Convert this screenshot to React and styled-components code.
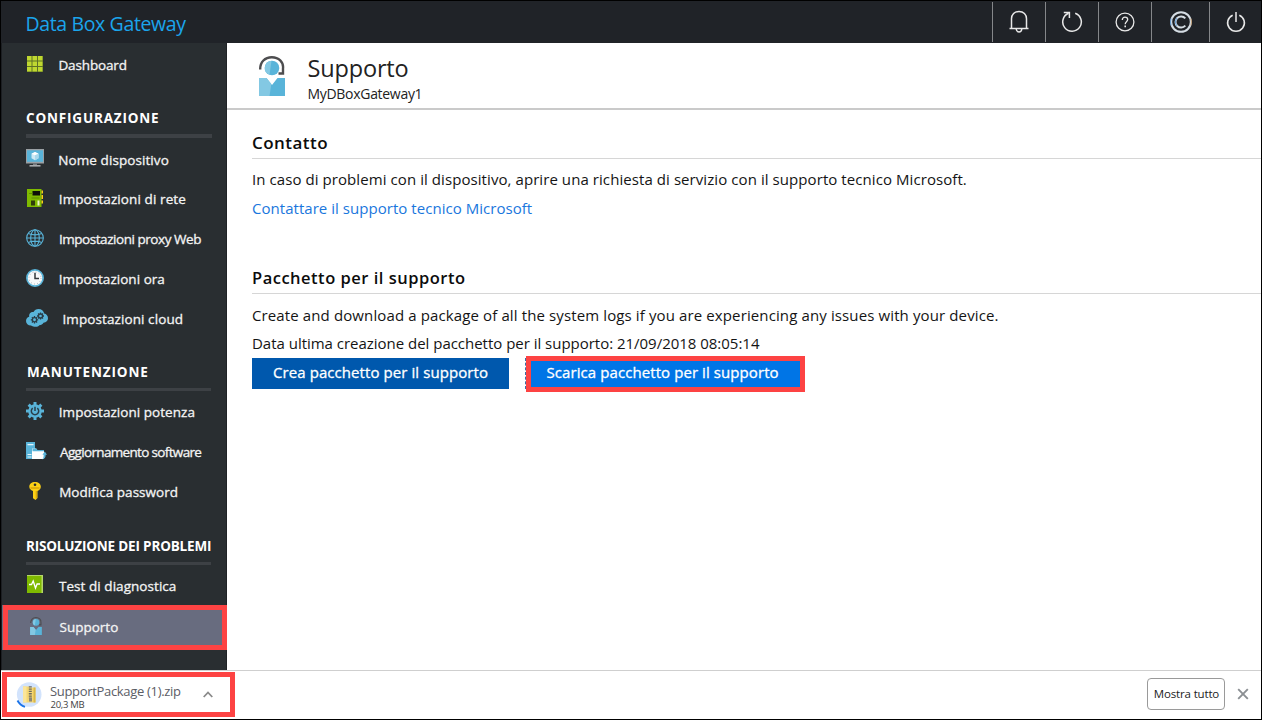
import React from "react";
import styled, { createGlobalStyle } from "styled-components";

const GlobalStyle = createGlobalStyle`
  *, *::before, *::after { box-sizing: border-box; }
  body {
    margin: 0;
    font-family: "Open Sans", "Noto Sans", sans-serif;
    color: #111;
    background: #fff;
  }
  h1, h2, h3, p { margin: 0; font-weight: 400; }
  svg { display: block; flex: none; }
  button { font-family: inherit; cursor: pointer; }
`;

const Window = styled.div`
  width: 1262px;
  height: 720px;
  display: flex;
  flex-direction: column;
  border: 1px solid #000;
  background: #fff;
  overflow: hidden;
`;

/* Top bar */
const TopBar = styled.header`
  flex: 0 0 42px;
  display: flex;
  justify-content: space-between;
  background: #202328;
`;

const Brand = styled.h1`
  padding: 3px 0 0 24.5px;
  font-size: 19.5px;
  line-height: 39px;
  letter-spacing: -0.37px;
  color: #1ba5ec;
`;

const Tools = styled.nav`
  display: flex;
  padding-top: 1px;
`;

const Tool = styled.button`
  width: ${(p) => p.$width}px;
  height: 40px;
  padding: 0 ${(p) => p.$inset || 0}px 0 0;
  display: flex;
  align-items: center;
  justify-content: center;
  border: 0;
  border-left: 1px solid #85878a;
  background: none;
  color: #e8e8e8;
`;

/* Side menu */
const Body = styled.div`
  flex: 0 0 627px;
  display: flex;
`;

const Sidebar = styled.aside`
  flex: 0 0 226px;
  padding-top: 2px;
  border-left: 1px solid #1b1e22;
  border-right: 1px solid #1f2226;
  background: #292e31;
  color: #f4f4f4;
`;

const Item = styled.a`
  position: relative;
  height: ${(p) => p.$height || 40}px;
  display: flex;
  align-items: center;
  padding: 0 0 ${(p) => (p.$active ? 2 : 0)}px 24px;
  background: ${(p) => (p.$active ? "#686c7f" : "none")};
`;

const IconSlot = styled.span`
  flex: 0 0 32px;
  height: 22px;
  display: flex;
  align-items: center;
  margin-top: ${(p) => p.$lift || -3}px;
`;

const ItemText = styled.span`
  padding-left: ${(p) => p.$indent || 0}px;
  font-size: 13.5px;
  -webkit-text-stroke: 0.3px currentColor;
  line-height: 20px;
  letter-spacing: ${(p) => p.$spacing || 0}px;
  white-space: nowrap;
`;

const Group = styled.h2`
  width: ${(p) => p.$width}px;
  margin: ${(p) => p.$top}px 0 ${(p) => p.$bottom}px 24px;
  padding: 0 0 6px ${(p) => p.$indent || 0}px;
  border-bottom: ${(p) => p.$rule}px solid #3d4145;
  font-size: 13.5px;
  font-weight: 700;
  line-height: 20px;
  letter-spacing: ${(p) => p.$spacing}px;
  white-space: nowrap;
  color: #fff;
`;

const RowFrame = styled.span`
  position: absolute;
  inset: 0 -1px 0 1px;
  border: 5px solid #fd4343;
`;

/* Content */
const Main = styled.main`
  flex: 1;
  min-width: 0;
`;

const PageHeader = styled.div`
  height: 67px;
  display: flex;
  padding: 10px 0 0 32px;
  border-bottom: 2px solid #cacaca;
`;

const PageIcon = styled.div`
  padding-top: 3px;
`;

const PageTitles = styled.div`
  padding-left: 22px;
`;

const PageTitle = styled.h2`
  padding-left: 0.5px;
  font-size: 23.5px;
  line-height: 31px;
  letter-spacing: -0.16px;
  color: #222;
`;

const PageSubtitle = styled.p`
  padding-left: 0.5px;
  font-size: 14px;
  line-height: 20px;
  letter-spacing: -0.3px;
  color: #222;
`;

const Content = styled.div`
  padding: 17px 0 0 25px;
`;

const SectionTitle = styled.h3`
  margin-top: ${(p) => p.$top || 0}px;
  border-bottom: 1px solid #d6d6d6;
  font-size: ${(p) => p.$size}px;
  font-weight: 600;
  line-height: ${(p) => p.$line}px;
  letter-spacing: ${(p) => p.$spacing}px;
  color: #0c0c0c;
`;

const Text = styled.p`
  margin-top: ${(p) => p.$top}px;
  font-size: 15px;
  line-height: 20px;
  letter-spacing: ${(p) => p.$spacing}px;
  white-space: nowrap;
  color: #141414;
`;

const Link = styled(Text)`
  display: block;
  color: #1a77dd;
`;

const Actions = styled.div`
  margin-top: 3px;
  display: flex;
  gap: 17px;
`;

const Action = styled.button`
  width: 257px;
  height: 31px;
  margin-top: 2px;
  padding: 0 0 3px 21px;
  border: 0;
  background: #0058ad;
  color: #fff;
  font-size: 15px;
  -webkit-text-stroke: 0.3px currentColor;
  line-height: 28px;
  letter-spacing: 0.08px;
  text-align: left;
  white-space: nowrap;
`;

const MarkedAction = styled(Action)`
  position: relative;
  width: 279px;
  height: 36px;
  margin-top: 0;
  padding: 0 0 4px 15.5px;
  border: 5px solid #fd4343;
  background: #0075e6;
  line-height: 22px;

  &::before {
    content: "";
    position: absolute;
    left: -6px;
    top: -3px;
    height: 31px;
    border-left: 1px dashed #3a6ea5;
  }
`;

/* Downloads */
const Downloads = styled.footer`
  flex: 1;
  display: flex;
  align-items: center;
  justify-content: space-between;
  border-top: 1px solid #cfcfcf;
  padding: 0 12px 2px 1px;
`;

const Download = styled.div`
  width: 233px;
  height: 45px;
  margin-top: 1px;
  display: flex;
  align-items: center;
  border: 5px solid #fd4343;
  padding: 0 17px 0 9px;
`;

const FileInfo = styled.div`
  flex: 1;
  padding: 4px 0 0 8px;
`;

const FileName = styled.div`
  font-size: 13px;
  line-height: 16px;
  letter-spacing: -0.32px;
  white-space: nowrap;
  color: #5b5d66;
`;

const FileSize = styled.div`
  padding-left: 0.5px;
  font-size: 9.5px;
  line-height: 11px;
  letter-spacing: -0.3px;
  color: #444;
`;

const BarEnd = styled.div`
  display: flex;
  align-items: center;
  gap: 12px;
`;

const ShowAll = styled.button`
  width: 78px;
  height: 32px;
  padding: 0 0 1px 1px;
  border: 1px solid #9a9a9a;
  border-radius: 4px;
  background: #fff;
  font-size: 11.5px;
  letter-spacing: -0.16px;
  white-space: nowrap;
  color: #1c1c1c;
`;

/* Icons */
const line = { fill: "none", stroke: "currentColor", strokeWidth: 1.5 };

const Bell = () => (
  <svg width="20" height="24" viewBox="0 0 20 24" {...line}>
    <path d="M.5 18.500h19M2.500 18.500V8.800C2.500 4.600 5.500 1.500 10 1.500s7.500 3.100 7.500 7.300v9.700" />
    <path d="M7.200 19c.2 2 1.200 3 2.800 3s2.600-1 2.800-3" />
  </svg>
);

const Refresh = () => (
  <svg width="22" height="22" viewBox="0 0 22 22" {...line}>
    <path d="M14.200 2.200A9.300 9.300 0 1 1 7.600 2.300" />
    <path d="M2.800 1.600h5.600v5.400" />
  </svg>
);

const Help = () => (
  <svg width="20" height="20" viewBox="0 0 20 20" {...line} strokeWidth="1.3">
    <circle cx="10" cy="10" r="8.9" />
    <path d="M7.300 7.900c0-1.700 1.100-2.700 2.700-2.700s2.700 1 2.700 2.400c0 2.200-2.500 2.300-2.500 4.700" />
    <path d="M10.200 13.600v1.700" strokeWidth="1.6" />
  </svg>
);

const Copyright = () => (
  <svg width="24" height="24" viewBox="0 0 24 24" fill="none" stroke="#d5dde4" strokeWidth="2">
    <circle cx="12" cy="12" r="9.8" />
    <path d="M16.300 8.300A5.600 5.600 0 1 0 16.300 15.700" />
    <path d="M2.100 8.500a10.600 10.600 0 0 0 0 7M8 8a6.500 6.500 0 0 0 0 8" stroke="#4e93d8" strokeWidth=".8" />
    <path d="M21.900 8.500a10.600 10.600 0 0 1 0 7" stroke="#c99a66" strokeWidth=".8" />
  </svg>
);

const Power = () => (
  <svg width="20" height="22" viewBox="0 0 20 22" {...line}>
    <path d="M6.700 4.200A8.400 8.400 0 1 0 13.300 4.200M10 1v10" />
  </svg>
);

const GridIcon = () => (
  <svg width="18" height="18" viewBox="0 0 18 18">
    <rect x="1" y="1" width="16" height="16" fill="#5d7026" />
    {[1, 6.5, 12].map((y) =>
      [1, 6.5, 12].map((x) => (
        <rect key={`${x}-${y}`} x={x} y={y} width="4.5" height="4.5" fill="#bfd730" />
      ))
    )}
  </svg>
);

const Monitor = () => (
  <svg width="18" height="18" viewBox="0 0 18 18">
    <rect x="0" y="0" width="18" height="14.5" fill="#9aa0a4" />
    <rect x="1" y="1.3" width="16" height="11.5" fill="#59b4d9" />
    <path d="M5.500 4.700 9 3l3.500 1.700v4.600L9 11.200 5.500 9.300z" fill="#cfeaf5" />
    <path d="M5.500 4.700 9 6.300l3.500-1.600L9 3z" fill="#fff" />
    <path d="M9 6.300v4.900l3.500-1.900V4.700z" fill="#a9d8eb" />
    <path d="M7 14.500h4v1.500H7z" fill="#7a7f83" />
    <path d="M3.500 16h11v1.600h-11z" fill="#a7abae" />
  </svg>
);

const Board = () => (
  <svg width="18" height="18" viewBox="0 0 18 18">
    <path d="M1 0h14.500v18H1z" fill="#7fba00" />
    <path d="M15.500 1.500H17v3h-1.500zM15.500 6H17v4h-1.500zM15.500 11.500H17v3h-1.500z" fill="#fcd116" />
    <path d="M6.500 2H14v4.500H6.500z" fill="#0d0f08" />
    <path d="M5 11.500h4v5H5z" fill="#2f3d0a" />
    <path d="M11.500 11.500h2v5h-2z" fill="#e9f3c8" />
    <path d="M3 4.500h3.500M5.500 9h8" stroke="#5f8c00" strokeWidth="1" fill="none" />
  </svg>
);

const Globe = () => (
  <svg width="18" height="18" viewBox="0 0 18 18" fill="none" stroke="#59b4d9" strokeWidth="1.1">
    <circle cx="9" cy="9" r="8.3" />
    <ellipse cx="9" cy="9" rx="4.3" ry="8.3" />
    <path d="M9 .7v16.600M.7 9h16.600M2.200 4.600c4 1.500 9.600 1.500 13.600 0M2.200 13.400c4-1.500 9.600-1.500 13.600 0" />
  </svg>
);

const Clock = () => (
  <svg width="18" height="18" viewBox="0 0 18 18">
    <circle cx="9" cy="9" r="8.1" fill="#f7f9fa" stroke="#59b4d9" strokeWidth="1.7" />
    <path d="M9 3.800V9.500h4" fill="none" stroke="#33383c" strokeWidth="1.5" />
    <circle cx="9" cy="9" r="6" fill="none" stroke="#8a9095" strokeWidth=".8" strokeDasharray=".8 2.34" />
  </svg>
);

const spokes = (cx, cy, r, n) =>
  Array.from({ length: n }, (_, i) => {
    const a = (i * 2 * Math.PI) / n;
    return `M${cx} ${cy}L${(cx + r * Math.cos(a)).toFixed(2)} ${(cy + r * Math.sin(a)).toFixed(2)}`;
  }).join("");

const CloudGears = () => (
  <svg width="22" height="18" viewBox="0 0 22 18">
    <path
      d="M5 16.500C2 16.500 0 14.500 0 12c0-2.300 1.300-3.800 3.200-4.300C2.700 4.700 4.800 2.700 7.500 3c1-1.900 2.800-3 5-3 3 0 5.200 1.800 5.700 4.500C20.500 5 22 6.800 22 9.200c0 2.500-1.800 4.300-4.500 4.500-.8 1.600-2.300 2.500-4.200 2.500-.8 1-2 1.600-3.500 1.600S6 17.400 5 16.500z"
      fill="#59b4d9"
    />
    <g stroke="#2a3d48" strokeWidth="1.3" fill="#59b4d9">
      <path d={spokes(8.5, 10.8, 3.7, 8)} />
      <path d={spokes(14.5, 7, 3.5, 8)} />
      <circle cx="8.5" cy="10.8" r="2.1" />
      <circle cx="14.5" cy="7" r="2" />
    </g>
  </svg>
);

const PowerGear = () => (
  <svg width="18" height="18" viewBox="0 0 18 18">
    <path d={spokes(9, 9, 9, 8)} stroke="#59b4d9" strokeWidth="3" />
    <circle cx="9" cy="9" r="6.8" fill="#59b4d9" />
    <path d="M6.700 6.200a3.700 3.700 0 1 0 4.600 0M9 4.800V9" fill="none" stroke="#2a3f4a" strokeWidth="1.5" />
  </svg>
);

const ServerUpdate = () => (
  <svg width="21" height="18" viewBox="0 0 21 18">
    <path d="M0 0h9v17H0z" fill="#59b4d9" />
    <path d="M1.500 2h6v1.200h-6zM1.500 12h4v1h-4zM1.500 14.500h4v1h-4z" fill="#e3f3fa" />
    <path d="M6 6.500h4l1 1.500h7v9H6z" fill="#fff" />
    <path d="M6.500 6.500h4l1 1.500H18v1.300H6.500z" fill="#59b4d9" />
    <path d="M18.800 9.500 21 12.800h-1.300c0 2.600-1 4.200-3.700 4.700 1.200-1 1.700-2.300 1.700-4.700h-1.300z" fill="#59b4d9" />
  </svg>
);

const Key = () => (
  <svg width="18" height="18" viewBox="0 0 18 18">
    <path d="M9 0c3.300 0 5.800 2 5.800 4.800 0 2-1.300 3.500-3.300 4.200v7L9.500 18 7 16.300V9C4.800 8.300 3.300 6.800 3.300 4.800 3.300 2 5.700 0 9 0z" fill="#fcd116" />
    <circle cx="9" cy="2.7" r="1.3" fill="#2a2e32" />
    <path d="M4.500 5.500h9v1h-9zM9.800 9v7.500h.8V9z" fill="#c98f00" />
  </svg>
);

const Pulse = () => (
  <svg width="18" height="18" viewBox="0 0 18 18">
    <path d="M1 0h16v18H1z" fill="#b5d66a" />
    <path d="M1 1h14.500v17H1z" fill="#7fba00" />
    <path d="M3 9.500h2.500L7.200 6l2.300 7 1.600-4H14" fill="none" stroke="#fff" strokeWidth="1.3" />
  </svg>
);

const Agent = ({ width, height }) => (
  <svg width={width} height={height} viewBox="0 0 26 40">
    <path d="M1.200 13.500C1 6 6 1.200 12.800 1.200S24.800 6 24 12.500v5h-4.500" fill="none" stroke="#4d4d4f" strokeWidth="2.4" />
    <circle cx="13" cy="12" r="7.3" fill="#59b4d9" />
    <path d="M12.500 4.700a7.300 7.300 0 0 0-2 14.100z" fill="#83c8e3" />
    <path d="M0 22h7.500l5.500 7 5.500-7H26v18H0z" fill="#59b4d9" />
    <path d="M0 22h7.500l4.800 6.100L10.500 40H0z" fill="#83c8e3" />
  </svg>
);

const ZipFile = () => (
  <svg width="26" height="26" viewBox="0 0 26 26">
    <circle cx="13.2" cy="12.5" r="12.3" fill="#d2e3fc" />
    <path d="M1.500 18.500a13 13 0 0 0 7.500 6.300" fill="none" stroke="#1a73e8" strokeWidth="1.9" />
    <path d="M7 4.500h6l1 1h5.500v15H7z" fill="#f5d774" />
    <path d="M7 4.500h3.500v16H7z" fill="#fbe59a" />
    <path d="M17.500 5.500h2v15h-2z" fill="#d9b648" />
    <path d="M14.300 4.200v12" stroke="#6b6961" strokeWidth="3" strokeDasharray="1.3 1" />
    <path d="M13 15.500h3v4h-3z" fill="#8b8778" />
  </svg>
);

const Chevron = () => (
  <svg width="10" height="7" viewBox="0 0 10 7" fill="none" stroke="#8a8a8a" strokeWidth="1.8">
    <path d="M.7 6 5 1.500 9.300 6" />
  </svg>
);

const Close = () => (
  <svg width="12" height="12" viewBox="0 0 12 12" fill="none" stroke="#8b8f93" strokeWidth="1.9">
    <path d="m1.200 1.200 9.600 9.600M10.800 1.200l-9.600 9.600" />
  </svg>
);

const MenuItem = ({ icon, label, indent, spacing, height, active, lift }) => (
  <Item $height={height} $active={active}>
    <IconSlot $lift={lift}>{icon}</IconSlot>
    <ItemText $indent={indent} $spacing={spacing}>{label}</ItemText>
    {active && <RowFrame />}
  </Item>
);

export default function App() {
  return (
    <>
      <GlobalStyle />
      <Window>
        <TopBar>
          <Brand>Data Box Gateway</Brand>
          <Tools>
            <Tool $width={53} $inset={1}><Bell /></Tool>
            <Tool $width={53}><Refresh /></Tool>
            <Tool $width={53} $inset={1}><Help /></Tool>
            <Tool $width={58}><Copyright /></Tool>
            <Tool $width={52}><Power /></Tool>
          </Tools>
        </TopBar>
        <Body>
          <Sidebar>
            <MenuItem icon={<GridIcon />} label="Dashboard" indent={0.4} spacing={-0.13} />
            <Group $width={186} $top={23} $bottom={2} $rule={4} $spacing={0.82}>CONFIGURAZIONE</Group>
            <MenuItem icon={<Monitor />} label="Nome dispositivo" indent={0.3} spacing={0.08} height={39} />
            <MenuItem icon={<Board />} label="Impostazioni di rete" indent={0.8} spacing={0.1} />
            <MenuItem icon={<Globe />} label="Impostazioni proxy Web" indent={0.9} spacing={-0.45} />
            <MenuItem icon={<Clock />} label="Impostazioni ora" indent={0.8} spacing={0.03} />
            <MenuItem icon={<CloudGears />} label="Impostazioni cloud" indent={4.5} spacing={0.09} />
            <Group $width={185} $top={23} $bottom={1} $rule={3} $indent={1} $spacing={0.88}>MANUTENZIONE</Group>
            <MenuItem icon={<PowerGear />} label="Impostazioni potenza" indent={0.8} spacing={0.04} />
            <MenuItem icon={<ServerUpdate />} label="Aggiornamento software" indent={2} spacing={-0.66} />
            <MenuItem icon={<Key />} label="Modifica password" indent={1.2} spacing={0.03} />
            <Group $width={185} $top={24} $bottom={1} $rule={3} $spacing={-0.18}>RISOLUZIONE DEI PROBLEMI</Group>
            <MenuItem icon={<Pulse />} label="Test di diagnostica" indent={1} spacing={0.05} height={39} />
            <MenuItem
              icon={<Agent width={20} height={18} />}
              label="Supporto"
              indent={1.5}
              spacing={0}
              height={45}
              lift={-1}
              active
            />
          </Sidebar>
          <Main>
            <PageHeader>
              <PageIcon>
                <Agent width={26} height={40} />
              </PageIcon>
              <PageTitles>
                <PageTitle>Supporto</PageTitle>
                <PageSubtitle>MyDBoxGateway1</PageSubtitle>
              </PageTitles>
            </PageHeader>
            <Content>
              <SectionTitle $size={17} $line={31} $spacing={0.45}>Contatto</SectionTitle>
              <Text $top={10} $spacing={0.075}>
                In caso di problemi con il dispositivo, aprire una richiesta di servizio con il supporto tecnico Microsoft.
              </Text>
              <Link as="a" $top={9} $spacing={0.04}>
                Contattare il supporto tecnico Microsoft
              </Link>
              <SectionTitle $top={45} $size={16.5} $line={30} $spacing={0.5}>Pacchetto per il supporto</SectionTitle>
              <Text $top={11} $spacing={0.12}>
                Create and download a package of all the system logs if you are experiencing any issues with your device.
              </Text>
              <Text $top={8} $spacing={-0.02}>
                Data ultima creazione del pacchetto per il supporto: 21/09/2018 08:05:14
              </Text>
              <Actions>
                <Action>Crea pacchetto per il supporto</Action>
                <MarkedAction>Scarica pacchetto per il supporto</MarkedAction>
              </Actions>
            </Content>
          </Main>
        </Body>
        <Downloads>
          <Download>
            <ZipFile />
            <FileInfo>
              <FileName>SupportPackage (1).zip</FileName>
              <FileSize>20,3 MB</FileSize>
            </FileInfo>
            <Chevron />
          </Download>
          <BarEnd>
            <ShowAll>Mostra tutto</ShowAll>
            <Close />
          </BarEnd>
        </Downloads>
      </Window>
    </>
  );
}
